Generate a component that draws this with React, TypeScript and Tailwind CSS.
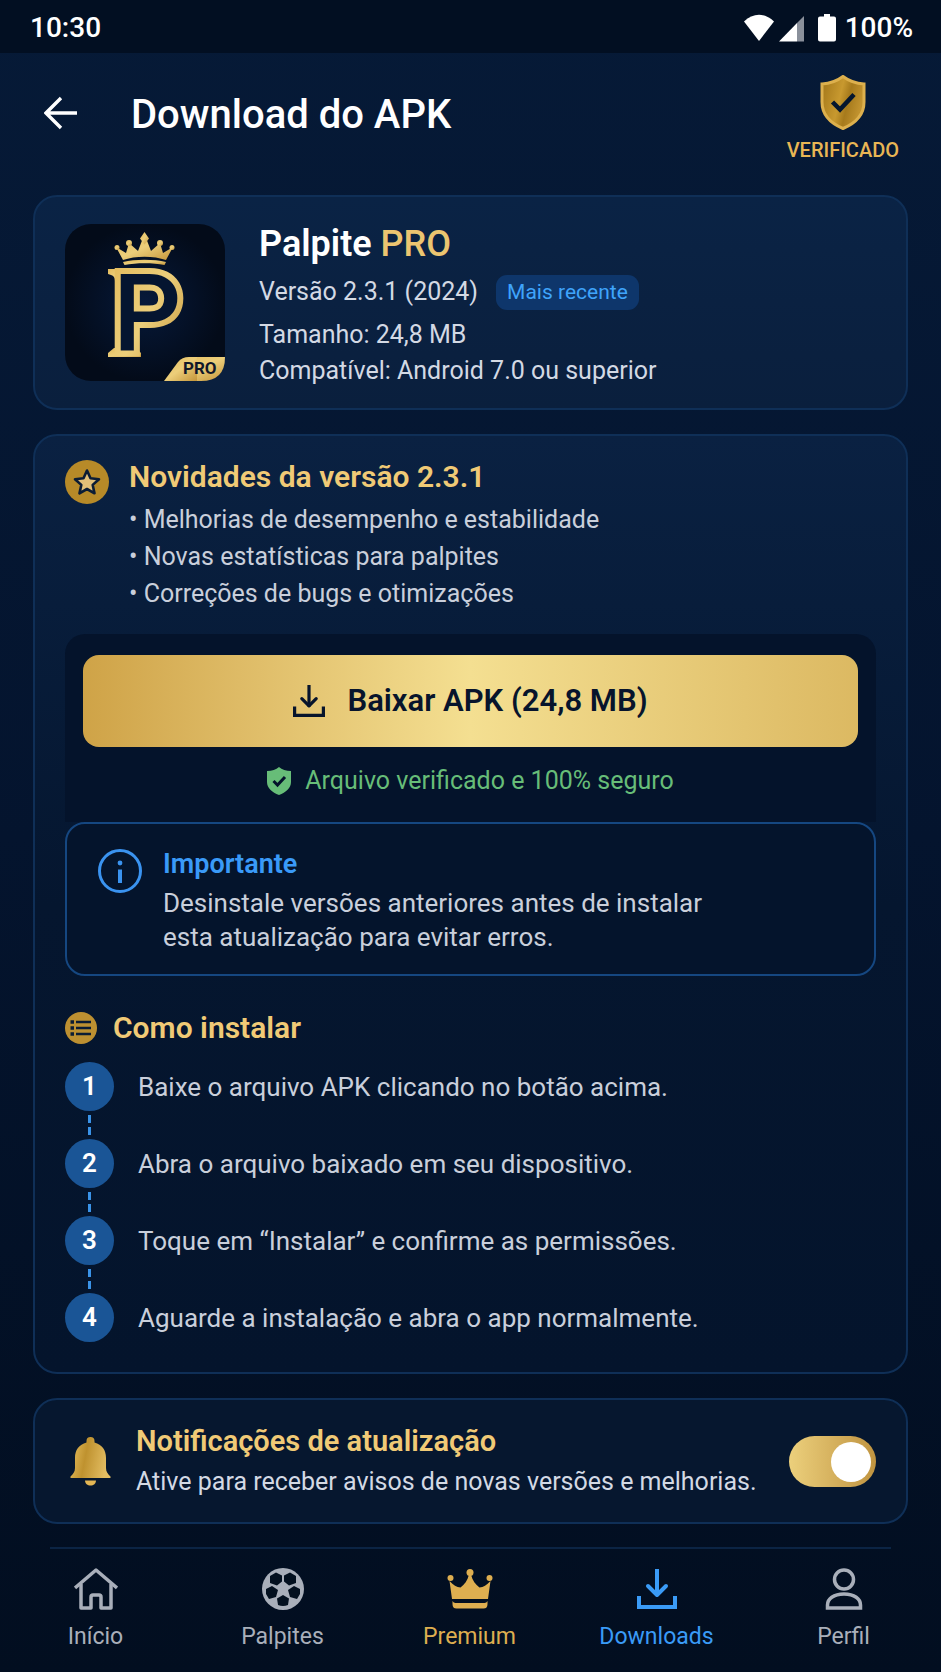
import { useState, type ReactNode } from "react";

const news = [
  "Melhorias de desempenho e estabilidade",
  "Novas estatísticas para palpites",
  "Correções de bugs e otimizações",
];

const steps = [
  "Baixe o arquivo APK clicando no botão acima.",
  "Abra o arquivo baixado em seu dispositivo.",
  "Toque em “Instalar” e confirme as permissões.",
  "Aguarde a instalação e abra o app normalmente.",
];

function Card({ className, children }: { className: string; children: ReactNode }) {
  return <section className={`rounded-3xl border-2 border-[#0f2f57] px-[30px] ${className}`}>{children}</section>;
}

function StatusBar() {
  return (
    <div className="flex h-[53px] items-center justify-between bg-[#020f22] pl-[30px] pr-7 pt-[2px] text-[28px] font-medium leading-9 text-white">
      <span>10:30</span>
      <div className="flex items-center">
        <svg className="h-7 w-[60px]" viewBox="0 0 60 28" fill="#fff" aria-hidden="true">
          <path d="M15 27 0 7.500C9 -1.500 21 -1.500 30 7.500Z" />
          <path d="M35 27.500 53 9v18.500Z" />
          <path d="M53 9 60 2v25.500h-7Z" fill="#8a909b" />
        </svg>
        <svg className="ml-[14px] h-7 w-[18px]" viewBox="0 0 18 28" fill="#fff" aria-hidden="true">
          <path d="M6 0h6v2.500h4a2 2 0 0 1 2 2v21a2 2 0 0 1-2 2H2a2 2 0 0 1-2-2v-21a2 2 0 0 1 2-2h4Z" />
        </svg>
        <span className="ml-[9px]">100%</span>
      </div>
    </div>
  );
}

function Header() {
  return (
    <header className="flex items-start pb-[33px] pl-11 pr-[42px] pt-[22px]">
      <button type="button" aria-label="Voltar" className="flex h-[76px] w-[34px] items-center">
        <svg className="size-[34px]" viewBox="0 0 34 34" fill="none" stroke="#fff" strokeWidth="3.400" aria-hidden="true">
          <path d="M33 17H3M17 2 2 17l15 15" />
        </svg>
      </button>
      <h1 className="ml-[53px] flex-1 text-[40px] font-medium leading-[80px] text-white">Download do APK</h1>
      <div className="flex flex-col items-center">
        <svg className="h-[55px] w-[46px]" viewBox="0 0 46 55" aria-hidden="true">
          <defs>
            <linearGradient id="shield" x1="0" y1="0" x2="1" y2="0.300">
              <stop offset="0" stopColor="#a17519" />
              <stop offset="0.500" stopColor="#c8992f" />
              <stop offset="0.700" stopColor="#a67a1c" />
              <stop offset="1" stopColor="#c2932f" />
            </linearGradient>
          </defs>
          <path
            d="M23 1.500C17 6 10 8.500 2 9v18c0 12 8 21 21 26.500C36 48 44 39 44 27V9C36 8.500 29 6 23 1.500Z"
            fill="url(#shield)"
            stroke="#ddb04d"
            strokeWidth="3"
          />
          <path d="m12.500 27 7.500 7.500L34 19.500" fill="none" stroke="#05162e" strokeWidth="4.500" />
        </svg>
        <span className="mt-2 text-xl font-medium leading-6 text-[#e9b654]">VERIFICADO</span>
      </div>
    </header>
  );
}

function AppLogo() {
  return (
    <svg className="h-[157px] w-40 shrink-0 overflow-visible" viewBox="0 0 160 157" role="img" aria-label="Palpite PRO">
      <defs>
        <linearGradient id="logo-gold" x1="0" y1="0" x2="1" y2="1">
          <stop offset="0" stopColor="#e3bb5c" />
          <stop offset="0.500" stopColor="#ecce7a" />
          <stop offset="1" stopColor="#c4953a" />
        </linearGradient>
        <radialGradient id="logo-bg">
          <stop offset="0" stopColor="#06193a" />
          <stop offset="1" stopColor="#030b19" />
        </radialGradient>
      </defs>
      <rect width="160" height="157" rx="26" fill="url(#logo-bg)" />
      <g fill="url(#logo-gold)">
        <path d="M58 36 51 23l10 6 3-10 9 8 6.500-17L86 27l9-8 3 10 10-6-7 13c-12-4.500-31-4.500-43 0Z" />
        <path d="M58 38c12-3 31-3 43 0l-1.500 3c-12-2.500-28-2.500-40 0Z" />
        <circle cx="52" cy="23.500" r="2.500" />
        <circle cx="64" cy="19" r="3" />
        <path d="m79.500 8 4.500 6.500-4.500 6-4.500-6Z" />
        <circle cx="95" cy="19" r="3" />
        <circle cx="107" cy="23.500" r="2.500" />
      </g>
      <g fill="url(#logo-gold)">
        <path d="M43 45h16v12h-9q0-5-4-6l-3-1Z" />
        <path d="M43 133v-4l6-5h22l5 5v4Z" />
      </g>
      <text
        x="48"
        y="127"
        fontSize="107"
        fontWeight="500"
        fill="#051530"
        stroke="url(#logo-gold)"
        strokeWidth="12"
        paintOrder="stroke"
      >
        P
      </text>
      <g fill="url(#logo-gold)">
        <path d="M106 157 116 140q5-7 11-7h33q0 24-24 24Z" />
        <path d="M99 157 113 138q4-5 11-5h8v24Z" />
      </g>
      <text x="118" y="150" fontSize="17" fontWeight="700" fill="#10182a">
        PRO
      </text>
    </svg>
  );
}

function DownloadIcon({ className }: { className: string }) {
  return (
    <svg className={className} viewBox="0 0 40 40" fill="none" stroke="currentColor" strokeWidth="4" aria-hidden="true">
      <path d="M20 0v27" />
      <path d="m11 17 9 9 9-9" strokeLinecap="round" strokeLinejoin="round" />
      <path d="M2 27v11h36V27" />
    </svg>
  );
}

function AppCard() {
  return (
    <Card className="flex items-start gap-[34px] bg-linear-to-b from-[#0a2345] to-[#0a1f3d] pb-[19px] pt-[27px]">
      <AppLogo />
      <div className="text-[25px] leading-9 text-[#d3d9e4]">
        <h2 className="text-4xl font-semibold leading-10 text-white">
          Palpite <span className="font-medium text-[#ecc570]">PRO</span>
        </h2>
        <div className="mt-[10px] flex items-center gap-[18px]">
          <p>Versão 2.3.1 (2024)</p>
          <span className="rounded-[11px] bg-[#0e366b] px-[11px] text-[21px] leading-[35px] text-[#3fa4fb]">
            Mais recente
          </span>
        </div>
        <p className="mt-[7px]">Tamanho: 24,8 MB</p>
        <p>Compatível: Android 7.0 ou superior</p>
      </div>
    </Card>
  );
}

function News() {
  return (
    <div className="flex items-start gap-5">
      <svg className="mt-px size-11 shrink-0" viewBox="0 0 44 44" aria-hidden="true">
        <circle cx="22" cy="22" r="22" fill="#b78a28" />
        <path
          d="m22 10.500 3.500 7.800 8.500.900-6.300 5.700 1.800 8.400L22 29l-7.500 4.300 1.800-8.400-6.300-5.700 8.500-.900Z"
          fill="#e2bf78"
          stroke="#0b1c35"
          strokeWidth="2.600"
          strokeLinejoin="round"
        />
      </svg>
      <div>
        <h2 className="text-3xl font-semibold leading-9 text-[#f0ca76]">Novidades da versão 2.3.1</h2>
        <ul className="mt-[6px] text-[25px] leading-[37px] text-[#c9cfdb]">
          {news.map((item) => (
            <li key={item}>• {item}</li>
          ))}
        </ul>
      </div>
    </div>
  );
}

function DownloadPanel() {
  return (
    <div className="mt-[22px] rounded-t-[20px] bg-[#04132b] px-[18px] pb-[23px] pt-[21px]">
      <button
        type="button"
        className="flex h-[92px] w-full items-center justify-center gap-[22px] rounded-2xl bg-linear-to-r from-[#cfa347] via-[#f4df91] to-[#dcb962] text-[31px] font-semibold text-[#07142c]"
      >
        <DownloadIcon className="size-8" />
        Baixar APK (24,8 MB)
      </button>
      <p className="mt-4 flex items-center justify-center gap-[14px] text-[25px] leading-9 text-[#67bd78]">
        <svg className="h-7 w-6" viewBox="0 0 24 28" aria-hidden="true">
          <path d="M12 0c3 2.500 7 4 12 4v11c0 6-5 10.500-12 13C5 25.500 0 21 0 15V4c5 0 9-1.500 12-4Z" fill="#67bd78" />
          <path d="m6.500 14 4 4 7.500-8" fill="none" stroke="#04132b" strokeWidth="3" />
        </svg>
        Arquivo verificado e 100% seguro
      </p>
    </div>
  );
}

function Notice() {
  return (
    <div className="flex items-start gap-[21px] rounded-[20px] border-2 border-[#154781] bg-[#04142c] pb-5 pl-[31px] pr-8 pt-[22px]">
      <svg className="mt-[3px] size-11 shrink-0" viewBox="0 0 44 44" fill="none" stroke="#3a93f0" aria-hidden="true">
        <circle cx="22" cy="22" r="20.500" strokeWidth="3" />
        <path d="M22 20.500V34" strokeWidth="4" />
        <circle cx="22" cy="14" r="2.400" fill="#3a93f0" stroke="none" />
      </svg>
      <div>
        <h3 className="text-[27px] font-semibold leading-9 text-[#3a9af8]">Importante</h3>
        <p className="mt-1 max-w-[560px] text-[26px] leading-[34px] text-[#c9cfdb]">
          Desinstale versões anteriores antes de instalar esta atualização para evitar erros.
        </p>
      </div>
    </div>
  );
}

function InstallSteps() {
  return (
    <>
      <div className="mt-[34px] flex items-center gap-4">
        <svg className="size-8" viewBox="0 0 32 32" stroke="#0b1c35" strokeWidth="2.500" aria-hidden="true">
          <circle cx="16" cy="16" r="16" fill="#bd9031" stroke="none" />
          <path d="M11 10h15M11 16h15M11 22h15" />
          <path d="M5.500 10H9M5.500 16H9M5.500 22H9" strokeWidth="3.500" />
        </svg>
        <h2 className="text-3xl font-semibold leading-9 text-[#f0ca76]">Como instalar</h2>
      </div>
      <ol className="mt-4">
        {steps.map((step, i) => (
          <li key={step} className="flex gap-6">
            <div className="flex w-[49px] flex-col items-center">
              <span className="flex size-[49px] items-center justify-center rounded-full bg-[#1a5596] text-[26px] font-semibold text-white">
                {i + 1}
              </span>
              {i < steps.length - 1 && (
                <span className="flex h-7 flex-col items-center gap-1 pt-1">
                  <span className="h-2 w-[3px] bg-[#3a93e8]" />
                  <span className="h-2 w-[3px] bg-[#3a93e8]" />
                </span>
              )}
            </div>
            <p className="text-[26px] leading-[50px] text-[#c9cfdb]">{step}</p>
          </li>
        ))}
      </ol>
    </>
  );
}

function NotificationCard() {
  const [enabled, setEnabled] = useState(true);

  return (
    <Card className="mt-6 flex items-center bg-[#06172f] pb-[22px] pt-[23px]">
      <svg className="ml-[5px] h-[49px] w-[41px] shrink-0" viewBox="0 0 41 49" aria-hidden="true">
        <defs>
          <linearGradient id="bell" x1="0" y1="0" x2="1" y2="0.200">
            <stop offset="0" stopColor="#e8c160" />
            <stop offset="0.450" stopColor="#bf922f" />
            <stop offset="1" stopColor="#e3bd62" />
          </linearGradient>
        </defs>
        <path
          d="M20.500 0a4 4 0 0 1 4 4v1.500C32 7.500 36 13 36 21v10c0 4 2 6 4.500 8.500V41H.500v-1.500C3 37 5 35 5 31V21C5 13 9 7.500 16.500 5.500V4a4 4 0 0 1 4-4Z"
          fill="url(#bell)"
        />
        <path d="M15 43.500h11c0 3-2.500 5-5.500 5s-5.500-2-5.500-5Z" fill="#e3b654" />
      </svg>
      <label htmlFor="notify" className="ml-[25px] flex-1">
        <span className="block text-[29px] font-semibold leading-9 text-[#f0ca76]">Notificações de atualização</span>
        <span className="mt-[5px] block text-[25px] leading-9 text-[#d3d9e4]">
          Ative para receber avisos de novas versões e melhorias.
        </span>
      </label>
      <input
        id="notify"
        type="checkbox"
        checked={enabled}
        onChange={(e) => setEnabled(e.target.checked)}
        className="flex h-[51px] w-[87px] shrink-0 appearance-none items-center rounded-full bg-[#26384f] px-[5px] before:size-10 before:rounded-full before:bg-white before:content-[''] checked:justify-end checked:bg-linear-to-r checked:from-[#ecd07c] checked:to-[#c09440]"
      />
    </Card>
  );
}

function HomeIcon() {
  return (
    <svg className="h-[42px] w-11" viewBox="0 0 44 42" fill="none" stroke="currentColor" strokeWidth="3.500" strokeLinejoin="round" aria-hidden="true">
      <path d="M1 20 22 2l21 18" />
      <path d="M7 16v24h10V29q0-2 2-2h6q2 0 2 2v11h10V16" />
    </svg>
  );
}

function BallIcon() {
  return (
    <svg className="size-[42px]" viewBox="0 0 42 42" aria-hidden="true">
      <circle cx="21" cy="21" r="21" fill="currentColor" />
      <g fill="#03101f">
        <path d="m8 8 6-3.500 6 3v6l-5 4-7-2.500Z" />
        <path d="m34 8-6-3.500-6 3v6l5 4 7-2.500Z" />
        <path d="m4 21 6-3 6 4-2 7-7 2-3-5Z" />
        <path d="m38 21-6-3-6 4 2 7 7 2 3-5Z" />
        <path d="m21 27 6 3.500-1 6.500q-5 2-10 0l-1-6.500Z" />
      </g>
    </svg>
  );
}

function CrownIcon() {
  return (
    <svg className="h-[42px] w-[46px]" viewBox="0 0 46 42" fill="currentColor" aria-hidden="true">
      <circle cx="23" cy="4.500" r="3.500" />
      <circle cx="3.500" cy="10" r="3" />
      <circle cx="42.500" cy="10" r="3" />
      <path d="M2.500 13c4 4 7 6.500 11 6.500 4-3 7-7 8.500-13h2c1.500 6 4.500 10 8.500 13 4 0 7-2.500 11-6.500L41 31H5Z" />
      <path d="M5.500 33q1 2 3 2h29q2 0 3-2v3q0 4.500-4 4.500h-27q-4 0-4-4.500Z" />
    </svg>
  );
}

function ProfileIcon() {
  return (
    <svg className="size-[42px]" viewBox="0 0 42 42" fill="none" stroke="currentColor" strokeWidth="3.500" aria-hidden="true">
      <circle cx="21" cy="11.500" r="9.500" />
      <path d="M4.500 40v-3c0-6 6-11 16.500-11S37.500 31 37.500 37v3Z" />
    </svg>
  );
}

const tabs = [
  { label: "Início", color: "text-[#a9afba]", icon: <HomeIcon /> },
  { label: "Palpites", color: "text-[#a9afba]", icon: <BallIcon /> },
  { label: "Premium", color: "text-[#deae50]", icon: <CrownIcon /> },
  { label: "Downloads", color: "text-[#3a9bf7]", icon: <DownloadIcon className="my-px size-10" /> },
  { label: "Perfil", color: "text-[#a9afba]", icon: <ProfileIcon /> },
];

function BottomNav() {
  return (
    <nav className="mt-[23px]">
      <div className="mx-[50px] h-[2px] bg-[#0b2444]" />
      <div className="flex pb-[18px] pl-[2px] pr-1 pt-[19px]">
        {tabs.map((tab) => (
          <a
            key={tab.label}
            href={`#${tab.label.toLowerCase()}`}
            aria-current={tab.label === "Downloads" ? "page" : undefined}
            className={`flex flex-1 flex-col items-center gap-3 text-[23px] leading-[30px] ${tab.color}`}
          >
            {tab.icon}
            {tab.label}
          </a>
        ))}
      </div>
    </nav>
  );
}

export default function App() {
  return (
    <div className="min-h-screen bg-linear-to-b from-[#061a37] via-[#04142e] to-[#020e20] font-['Roboto',sans-serif]">
      <StatusBar />
      <Header />
      <main className="px-[33px]">
        <AppCard />
        <Card className="mt-6 bg-linear-to-b from-[#0a2142] via-[#05162f] to-[#04142c] pb-[29px] pt-[23px]">
          <News />
          <DownloadPanel />
          <Notice />
          <InstallSteps />
        </Card>
        <NotificationCard />
      </main>
      <BottomNav />
    </div>
  );
}
